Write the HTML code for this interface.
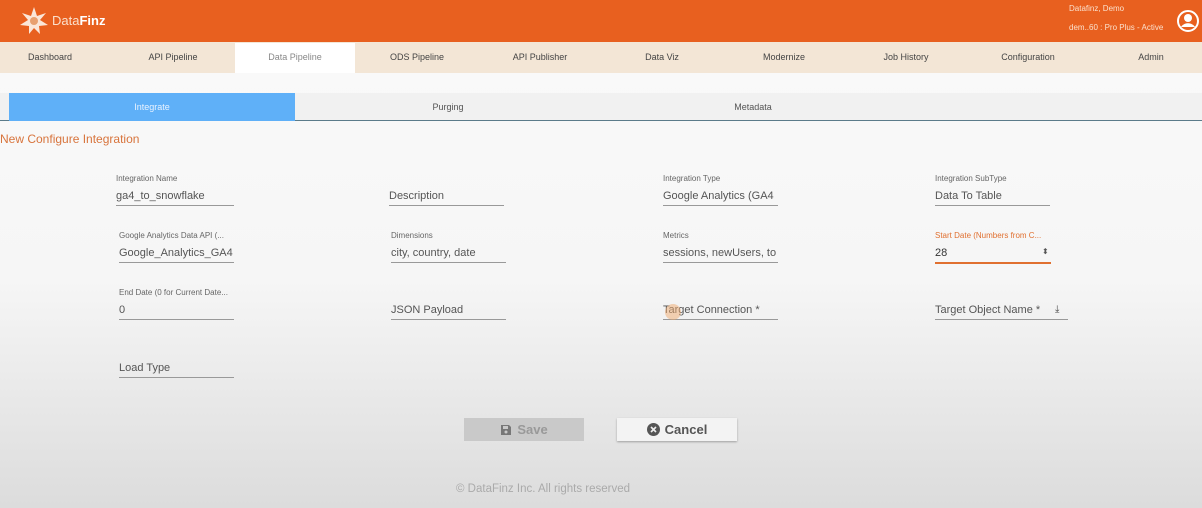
<!DOCTYPE html>
<html><head><style>
*{margin:0;padding:0;box-sizing:border-box}
body{width:1202px;height:508px;overflow:hidden;font-family:"Liberation Sans",sans-serif;background:linear-gradient(#fafafa 0%,#f6f6f6 55%,#dcdcdc 100%);position:relative}
.hdr{position:absolute;left:0;top:0;width:1202px;height:42px;background:#e8601f}
.nav{position:absolute;left:0;top:42px;width:1202px;height:31px;background:#f3e6d6}
.nav span{position:absolute;top:10px;font-size:9px;color:#444;transform:translateX(-50%)}
.act{position:absolute;left:235px;top:43px;width:120px;height:30px;background:#fff}
.tabs{position:absolute;left:0;top:93px;width:1202px;height:28px;background:#f1f1f1;border-bottom:1px solid #5b7b8a}
.tabs span{position:absolute;top:9px;font-size:9px;color:#555;transform:translateX(-50%)}
.t1{position:absolute;left:9px;top:93px;width:286px;height:28px;background:#5fb0f8}
.f{position:absolute}
.f .l{font-size:8px;color:#666;position:absolute;top:0;white-space:nowrap}
.f .v{font-size:11px;color:#555;position:absolute;top:16px;white-space:nowrap;overflow:hidden}
.f .u{position:absolute;top:31px;left:0;height:1px;background:#999}
.btn{position:absolute;top:418px;height:23px;font-size:13px;font-weight:bold;display:flex;align-items:center;justify-content:center;gap:5px}
</style></head><body>
<div class="hdr"></div>
<svg style="position:absolute;left:17px;top:5px" width="34" height="30" viewBox="0 0 34 30"><g fill="#fbe6d8"><path d="M17 2l3 9 9-3-6 7 8 5-9 1 1 8-6-6-5 6 0-8-9-1 8-5-6-7 9 3z"/></g><circle cx="17" cy="16" r="4" fill="#e8a070"/></svg>
<div style="position:absolute;left:52px;top:13px;font-size:13px;color:#fbe0cc">Data<b style="color:#fff">Finz</b></div>
<div style="position:absolute;left:1069px;top:4px;font-size:8px;color:#fbe0cc">Datafinz, Demo</div>
<div style="position:absolute;left:1069px;top:23px;font-size:8px;color:#fbe0cc">dem..60 : Pro Plus - Active</div>
<svg style="position:absolute;left:1177px;top:10px" width="22" height="22" viewBox="0 0 22 22"><circle cx="11" cy="11" r="10" fill="none" stroke="#fff" stroke-width="2"/><circle cx="11" cy="8" r="4" fill="#fff"/><path d="M4 17c3-5 11-5 14 0" fill="#fff"/></svg>
<div class="nav">
<span style="left:50px">Dashboard</span><span style="left:173px">API Pipeline</span><span style="left:295px;color:#888">Data Pipeline</span><span style="left:417px">ODS Pipeline</span><span style="left:540px">API Publisher</span><span style="left:662px">Data Viz</span><span style="left:784px">Modernize</span><span style="left:906px">Job History</span><span style="left:1028px">Configuration</span><span style="left:1151px">Admin</span>
</div>
<div class="act"></div>
<div style="position:absolute;left:295px;top:52px;font-size:9px;color:#888;transform:translateX(-50%)">Data Pipeline</div>
<div class="tabs"><span style="left:448px">Purging</span><span style="left:753px">Metadata</span></div>
<div class="t1"></div>
<div style="position:absolute;left:152px;top:102px;font-size:9px;color:#e8f2ff;transform:translateX(-50%)">Integrate</div>
<div style="position:absolute;left:0;top:132px;font-size:12px;color:#d8743c">New Configure Integration</div>

<div class="f" style="left:116px;top:174px"><div class="l">Integration Name</div><div class="v">ga4_to_snowflake</div><div class="u" style="width:118px"></div></div>
<div class="f" style="left:389px;top:174px"><div class="v">Description</div><div class="u" style="width:115px"></div></div>
<div class="f" style="left:663px;top:174px"><div class="l">Integration Type</div><div class="v" style="width:115px">Google Analytics (GA4</div><div class="u" style="width:115px"></div></div>
<div class="f" style="left:935px;top:174px"><div class="l">Integration SubType</div><div class="v">Data To Table</div><div class="u" style="width:115px"></div></div>

<div class="f" style="left:119px;top:231px"><div class="l">Google Analytics Data API (...</div><div class="v" style="width:115px">Google_Analytics_GA4</div><div class="u" style="width:115px"></div></div>
<div class="f" style="left:391px;top:231px"><div class="l">Dimensions</div><div class="v">city, country, date</div><div class="u" style="width:115px"></div></div>
<div class="f" style="left:663px;top:231px"><div class="l">Metrics</div><div class="v" style="width:115px">sessions, newUsers, to</div><div class="u" style="width:115px"></div></div>
<div class="f" style="left:935px;top:231px"><div class="l" style="color:#e07030">Start Date (Numbers from C...</div><div class="v" style="color:#333">28</div><div class="u" style="width:116px;background:#e07030;height:2px"></div><div style="position:absolute;left:107px;top:16px;font-size:8px;color:#555">⬍</div></div>

<div class="f" style="left:119px;top:288px"><div class="l">End Date (0 for Current Date...</div><div class="v">0</div><div class="u" style="width:115px"></div></div>
<div class="f" style="left:391px;top:288px"><div class="v">JSON Payload</div><div class="u" style="width:115px"></div></div>
<div class="f" style="left:663px;top:288px"><div class="v">Target Connection *</div><div class="u" style="width:115px"></div><div style="position:absolute;left:2px;top:16px;width:16px;height:16px;border-radius:50%;background:rgba(240,170,110,.5)"></div></div>
<div class="f" style="left:935px;top:288px"><div class="v">Target Object Name *</div><div class="u" style="width:133px"></div><div style="position:absolute;left:120px;top:16px;font-size:10px;color:#444">⤓</div></div>

<div class="f" style="left:119px;top:346px"><div class="v">Load Type</div><div class="u" style="width:115px"></div></div>

<div class="btn" style="left:464px;width:120px;background:#c9c9c9;color:#999"><svg width="12" height="12" viewBox="0 0 12 12"><path d="M1 1h8l2 2v8H1z" fill="#777"/><rect x="3" y="2" width="5" height="3" fill="#c9c9c9"/><circle cx="6" cy="8" r="1.5" fill="#c9c9c9"/></svg>Save</div>
<div class="btn" style="left:617px;width:120px;background:#f3f3f3;color:#555;box-shadow:0 1px 2px rgba(0,0,0,.3)"><svg width="13" height="13" viewBox="0 0 13 13"><circle cx="6.5" cy="6.5" r="6.5" fill="#555"/><path d="M4 4l5 5M9 4l-5 5" stroke="#eee" stroke-width="1.6"/></svg>Cancel</div>
<div style="position:absolute;left:456px;top:483px;font-size:11.5px;color:#aaa">© DataFinz Inc. All rights reserved</div>
</body></html>
